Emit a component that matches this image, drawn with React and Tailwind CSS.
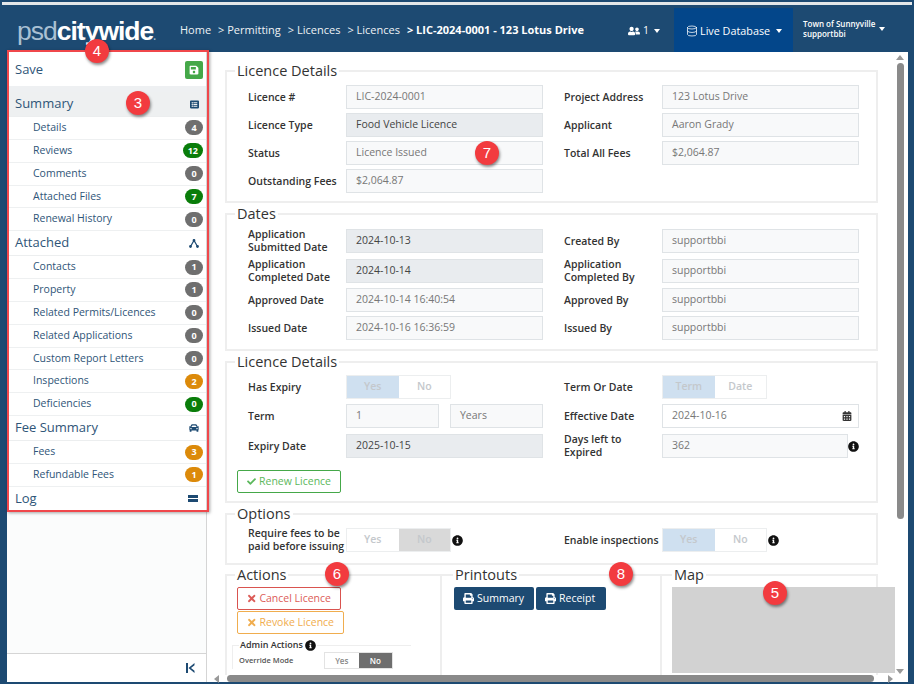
import React from 'react';
import { FaSave, FaListAlt, FaCar, FaPrint, FaTimes, FaCheck, FaCalendarAlt, FaInfoCircle, FaUserFriends } from 'react-icons/fa';
import { Database } from 'lucide-react';

const GREY = 'bg-[#6f6f6f]';
const GREEN = 'bg-[#0a7d0a]';
const ORANGE = 'bg-[#dc8a0a]';

const summaryRows = [
  ['Details', 4, GREY],
  ['Reviews', 12, GREEN],
  ['Comments', 0, GREY],
  ['Attached Files', 7, GREEN],
  ['Renewal History', 0, GREY],
];
const attachedRows = [
  ['Contacts', 1, GREY],
  ['Property', 1, GREY],
  ['Related Permits/Licences', 0, GREY],
  ['Related Applications', 0, GREY],
  ['Custom Report Letters', 0, GREY],
  ['Inspections', 2, ORANGE],
  ['Deficiencies', 0, GREEN],
];
const feeRows = [
  ['Fees', 3, ORANGE],
  ['Refundable Fees', 1, ORANGE],
];

function SideHead({ title, icon, active }) {
  return (
    <div className={`h-[25px] flex items-center justify-between pl-2 pr-[6px] border-b border-[#eceeef] ${active ? 'bg-[#eef0f1]' : 'bg-white'}`}>
      <span className="text-[13px] text-[#2f5578]">{title}</span>
      <span className="w-[12px] flex justify-center text-[#1d4a72]">{icon}</span>
    </div>
  );
}

function SideRow({ label, count, color }) {
  return (
    <div className="h-[22.85px] flex items-center justify-between pl-[26px] pr-[3px] border-b border-[#eef0f1] bg-white">
      <span className="text-[10.5px] text-[#2f5578]">{label}</span>
      <span className={`${color} h-[15px] min-w-[18px] px-[5px] rounded-full text-white text-[9px] font-bold flex items-center justify-center`}>{count}</span>
    </div>
  );
}

function Label({ children, className = '' }) {
  return <div className={`text-[10.5px] leading-[13px] font-semibold text-[#333] self-center ${className}`}>{children}</div>;
}

function Field({ label, value, dark, icon, className = '' }) {
  return (
    <>
      <Label>{label}</Label>
      <Box value={value} dark={dark} icon={icon} className={`w-[197px] self-center ${className}`} />
    </>
  );
}

function Box({ value, dark, icon, className = '' }) {
  return (
    <div className={`h-[24px] flex items-center justify-between px-[9px] border border-[#dfe3e6] text-[10.5px] ${dark ? 'bg-[#e9ecef] text-[#444]' : 'bg-[#f8f9fa] text-[#777]'} ${className}`}>
      <span>{value}</span>
      {icon}
    </div>
  );
}

function Toggle({ left, right, on = 'left', offDark, small }) {
  const cell = 'flex-1 flex items-center justify-center font-semibold';
  if (small) {
    return (
      <div className="w-[69px] h-[17px] flex border border-[#e3e3e3] text-[8px]">
        <div className={`${cell} bg-white text-[#888]`}>{left}</div>
        <div className={`${cell} bg-[#6e6e6e] text-white`}>{right}</div>
      </div>
    );
  }
  return (
    <div className="w-[105px] h-[24px] flex border border-[#eceeef] text-[10.5px] text-[#c4c8cc]">
      <div className={`${cell} ${on === 'left' ? 'bg-[#cfe0f0]' : 'bg-white'}`}>{left}</div>
      <div className={`${cell} ${offDark ? 'bg-[#d9d9d9]' : 'bg-white'}`}>{right}</div>
    </div>
  );
}

function Info({ className = '' }) {
  return <FaInfoCircle className={`text-[#111] text-[11px] shrink-0 ${className}`} />;
}

function Section({ title, className = '', children }) {
  return (
    <fieldset className={`border-2 border-[#eeeeee] pl-[21px] pr-[17px] min-w-0 ${className}`}>
      <legend className="-ml-[13px] px-[2px] text-[14.5px] leading-[16px] text-[#333]">{title}</legend>
      {children}
    </fieldset>
  );
}

function Marker({ n, className }) {
  return (
    <div className={`absolute w-[24px] h-[24px] rounded-full bg-[#f23b3f] text-white text-[15px] flex items-center justify-center shadow-[1px_2px_3px_rgba(0,0,0,0.45)] ${className}`}
      style={{ fontFamily: '"Liberation Sans", sans-serif' }}>{n}</div>
  );
}

function ActionBtn({ icon, label, className }) {
  return (
    <div className={`h-[23px] inline-flex items-center gap-[3px] px-[9px] border rounded-[2px] bg-white text-[10.5px] whitespace-nowrap ${className}`}>
      {icon}{label}
    </div>
  );
}

function PrintBtn({ label, className = '' }) {
  return (
    <div className={`h-[23px] inline-flex items-center gap-[3px] pl-[9px] rounded-[2px] bg-[#1d4a72] text-white text-[10.5px] ${className}`}>
      <FaPrint className="text-[11px]" />{label}
    </div>
  );
}

export default function App() {
  return (
    <div className="relative w-[914px] h-[684px] overflow-hidden bg-[#1d4a72]" style={{ fontFamily: '"Open Sans", sans-serif' }}>
      <div className="h-[2px]" />
      <div className="h-[3px] bg-[#e4e7e9] ml-[2px] mr-[2px]" />

      {/* Header */}
      <div className="h-[47px] flex items-stretch pr-[6px] text-white">
        <div className="w-[180px] pl-[17px] pt-[10px] text-[26.5px] leading-[32px] tracking-[-1px] font-bold shrink-0" style={{ fontFamily: '"Liberation Sans", sans-serif' }}>
          <span className="font-normal text-[#a9c0d3]">psd</span>citywide<span className="text-[10px] text-[#a9c0d3]">.</span>
        </div>
        <div className="w-[440px] pt-[3px] flex items-center gap-[7px] text-[11px] text-[#eef2f5] whitespace-nowrap shrink-0">
          <span>Home</span><span>&gt; Permitting</span><span>&gt; Licences</span><span>&gt; Licences</span>
          <span className="font-bold text-white">&gt; LIC-2024-0001 - 123 Lotus Drive</span>
        </div>
        <div className="w-[54px] flex items-center gap-[3px] pl-[8px] text-[10.5px] shrink-0 pt-[5px]">
          <FaUserFriends className="text-[12px]" />1<span className="ml-[2px] border-x-[3px] border-x-transparent border-t-[4px] border-t-white" />
        </div>
        <div className="w-[119px] mt-[3px] flex items-center gap-[2px] pl-[12px] pt-[2px] bg-[#03468a] text-[10.8px] shrink-0">
          <Database size={12} strokeWidth={1.5} />Live Database<span className="ml-[4px] border-x-[3px] border-x-transparent border-t-[4px] border-t-white" />
        </div>
        <div className="flex items-center pl-[10px] shrink-0">
          <div className="text-[8px] leading-[10px] font-semibold">
            <div>Town of Sunnyville</div>
            <div>supportbbi</div>
          </div>
          <span className="ml-[4px] border-x-[3px] border-x-transparent border-t-[4px] border-t-white" />
        </div>
      </div>

      {/* Body */}
      <div className="h-[630px] ml-[7px] mr-[6px] flex bg-white">
        {/* Sidebar */}
        <div className="w-[200px] shrink-0 flex flex-col bg-[#fbfcfc] border-r border-[#d5d5d5]">
          <div className="h-[34px] pt-[1px] flex items-center justify-between pl-2 pr-[3px] bg-white">
            <span className="text-[13px] text-[#2f5578]">Save</span>
            <span className="w-[18px] h-[18px] bg-[#45a849] rounded-[2px] flex items-center justify-center text-white"><FaSave className="text-[10px]" /></span>
          </div>
          <div className="h-[6px] bg-[#eef0f2]" />
          <SideHead title="Summary" active icon={<FaListAlt className="text-[9px]" />} />
          {summaryRows.map(([l, c, k]) => <SideRow key={l} label={l} count={c} color={k} />)}
          <SideHead title="Attached" icon={
            <svg width="10" height="9" viewBox="0 0 10 9" fill="none" stroke="currentColor" strokeWidth="1.2"><path d="M1.5 7.5 5 1.5l3.5 6" /><circle cx="5" cy="1.5" r=".8" fill="currentColor" /><circle cx="1.5" cy="7.5" r=".8" fill="currentColor" /><circle cx="8.5" cy="7.5" r=".8" fill="currentColor" /></svg>
          } />
          {attachedRows.map(([l, c, k]) => <SideRow key={l} label={l} count={c} color={k} />)}
          <SideHead title="Fee Summary" icon={<FaCar className="text-[10px]" />} />
          {feeRows.map(([l, c, k]) => <SideRow key={l} label={l} count={c} color={k} />)}
          <div className="h-[24px] flex items-center justify-between pl-2 pr-[8px] bg-white">
            <span className="text-[13px] text-[#2f5578]">Log</span>
            <span className="w-[10px] flex flex-col gap-[1px]"><span className="h-[3px] bg-[#1d4a72]" /><span className="h-[3px] bg-[#1d4a72]" /></span>
          </div>
          <div className="flex-1" />
          <div className="h-[29px] border-t border-[#d5d5d5] bg-white flex items-center justify-end pr-[11px] text-[#1d4a72]">
            <svg width="9" height="10" viewBox="0 0 9 10" fill="currentColor"><rect x="0" y="0" width="2" height="10" /><path d="M8.5 0v2.2L5 5l3.5 2.8V10L2.5 5z" /></svg>
          </div>
        </div>

        {/* Main */}
        <div className="flex-1 min-w-0 flex flex-col">
          <div className="flex-1 min-h-0 flex">
            <div className="flex-1 min-w-0 overflow-hidden pl-[18px] pt-[11px]">
              <div className="w-[653px] flex flex-col gap-[3px]">
                <Section title="Licence Details" className="h-[140px]">
                  <div className="grid grid-cols-[98px_218px_98px_197px] gap-y-[4px] pt-[6px]">
                    <Field label="Licence #" value="LIC-2024-0001" />
                    <Field label="Project Address" value="123 Lotus Drive" />
                    <Field label="Licence Type" value="Food Vehicle Licence" dark />
                    <Field label="Applicant" value="Aaron Grady" />
                    <Field label="Status" value="Licence Issued" />
                    <Field label="Total All Fees" value="$2,064.87" />
                    <Field label="Outstanding Fees" value="$2,064.87" />
                  </div>
                </Section>
                <Section title="Dates" className="h-[145px]">
                  <div className="grid grid-cols-[98px_218px_98px_197px] gap-y-[4px] pt-[6px]">
                    <Field label="Application Submitted Date" value="2024-10-13" dark />
                    <Field label="Created By" value="supportbbi" />
                    <Field label="Application Completed Date" value="2024-10-14" dark />
                    <Field label="Application Completed By" value="supportbbi" />
                    <Field label="Approved Date" value="2024-10-14 16:40:54" />
                    <Field label="Approved By" value="supportbbi" />
                    <Field label="Issued Date" value="2024-10-16 16:36:59" />
                    <Field label="Issued By" value="supportbbi" />
                  </div>
                </Section>
                <Section title="Licence Details" className="h-[149px]">
                  <div className="grid grid-cols-[98px_218px_98px_197px] gap-y-[5px] pt-[5px]">
                    <Label>Has Expiry</Label>
                    <Toggle left="Yes" right="No" />
                    <Label>Term Or Date</Label>
                    <Toggle left="Term" right="Date" />
                    <Label>Term</Label>
                    <div className="w-[197px] flex justify-between">
                      <Box value="1" className="w-[93px]" />
                      <Box value="Years" className="w-[93px]" />
                    </div>
                    <Field label="Effective Date" value="2024-10-16" className="bg-white pr-[6px]" icon={<FaCalendarAlt className="text-[10px] text-[#333]" />} />
                    <Field label="Expiry Date" value="2025-10-15" dark />
                    <Label>Days left to Expired</Label>
                    <div className="w-[197px] flex items-center justify-between">
                      <Box value="362" className="w-[186px]" />
                      <Info />
                    </div>
                  </div>
                  <div className="mt-[10px] -ml-[11px]">
                    <ActionBtn icon={<FaCheck className="text-[11px]" />} label="Renew Licence" className="border-[#45a849] text-[#5cb85c] w-[104px]" />
                  </div>
                </Section>
                <Section title="Options" className="h-[59px]">
                  <div className="grid grid-cols-[98px_218px_98px_197px] pt-[5px]">
                    <Label className="whitespace-nowrap">Require fees to be<br />paid before issuing</Label>
                    <div className="flex items-center gap-[1px]"><Toggle left="Yes" right="No" on="right" offDark /><Info /></div>
                    <Label className="whitespace-nowrap">Enable inspections</Label>
                    <div className="flex items-center gap-[1px]"><Toggle left="Yes" right="No" /><Info /></div>
                  </div>
                </Section>
                <div className="flex h-[110px] -mt-[1px]">
                  <fieldset className="w-[217px] border-2 border-[#eeeeee] border-b-0 pl-[10px] shrink-0 min-w-0">
                    <legend className="-ml-[2px] px-[2px] text-[14.5px] leading-[16px] text-[#333]">Actions</legend>
                    <div className="flex flex-col items-start gap-[1px] pt-[4px]">
                      <ActionBtn icon={<FaTimes className="text-[11px]" />} label="Cancel Licence" className="border-[#d9534f] text-[#dc5c58] w-[104px]" />
                      <ActionBtn icon={<FaTimes className="text-[11px]" />} label="Revoke Licence" className="border-[#f0ad4e] text-[#f0ad4e] w-[107px]" />
                    </div>
                    <fieldset className="-ml-[5px] w-[179px] mt-[5px] border border-[#eeeeee] border-r-0 border-b-0 pl-[6px] min-w-0">
                      <legend className="flex items-center gap-[2px] px-[1px] text-[9px] leading-[12px] font-semibold text-[#333]">Admin Actions <Info className="text-[9px]" /></legend>
                      <div className="flex items-center pt-[1px]">
                        <div className="w-[85px] text-[7.5px] font-semibold text-[#555]">Override Mode</div>
                        <Toggle left="Yes" right="No" small />
                      </div>
                    </fieldset>
                  </fieldset>
                  <fieldset className="w-[220px] border-2 border-l-0 border-[#eeeeee] border-b-0 pl-[12px] shrink-0 min-w-0">
                    <legend className="-ml-[1px] px-[2px] text-[14.5px] leading-[16px] text-[#333]">Printouts</legend>
                    <div className="flex gap-[2px] pt-[4px]">
                      <PrintBtn label="Summary" className="w-[80px]" />
                      <PrintBtn label="Receipt" className="w-[70px]" />
                    </div>
                  </fieldset>
                  <fieldset className="w-[216px] border-2 border-l-0 border-[#eeeeee] border-b-0 pl-[10px] shrink-0 min-w-0">
                    <legend className="px-[2px] text-[14.5px] leading-[16px] text-[#333]">Map</legend>
                    <div className="w-[223px] h-[86px] bg-[#d2d2d2] mt-[4px]" />
                  </fieldset>
                </div>
              </div>
            </div>
            {/* Vertical scrollbar */}
            <div className="w-[13px] shrink-0 flex flex-col items-center pt-[3px] pr-[3px] pb-[1px]">
              <span className="border-x-[4px] border-x-transparent border-b-[5px] border-b-[#999]" />
              <div className="w-[7px] h-[456px] mt-[3px] rounded-[4px] bg-[#8a8a8a]" />
              <div className="flex-1" />
              <span className="border-x-[4px] border-x-transparent border-t-[5px] border-t-[#999]" />
            </div>
          </div>
          {/* Horizontal scrollbar */}
          <div className="h-[7px] shrink-0 flex items-center pl-[7px] pr-[15px]">
            <span className="border-y-[4px] border-y-transparent border-r-[5px] border-r-[#999]" />
            <div className="w-[647px] h-[7px] ml-[8px] rounded-[4px] bg-[#8a8a8a]" />
            <div className="flex-1" />
            <span className="border-y-[4px] border-y-transparent border-l-[5px] border-l-[#999]" />
          </div>
        </div>
      </div>

      {/* Annotation overlay */}
      <div className="absolute left-[7px] top-[50px] w-[202px] h-[462px] border-2 border-[#f0474b] shadow-[1px_1px_3px_rgba(0,0,0,0.35)] pointer-events-none" />
      <Marker n="4" className="left-[85px] top-[39px]" />
      <Marker n="3" className="left-[126px] top-[91px]" />
      <Marker n="7" className="left-[475px] top-[141px]" />
      <Marker n="6" className="left-[325px] top-[562px]" />
      <Marker n="8" className="left-[609px] top-[562px]" />
      <Marker n="5" className="left-[763px] top-[581px]" />
    </div>
  );
}
